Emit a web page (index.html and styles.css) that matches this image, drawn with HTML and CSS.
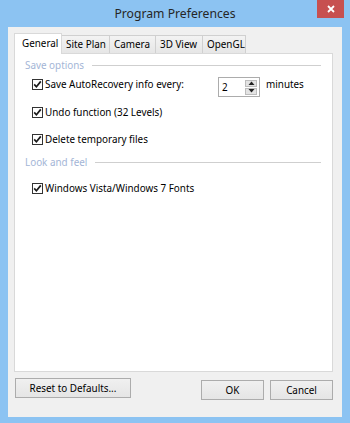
FILE: index.html
```html
<!DOCTYPE html>
<html>
<head>
<meta charset="utf-8">
<link rel="stylesheet" href="styles.css">
</head>
<body>
<div class="window">
  <div class="titlebar">
    <span class="spacer"></span>
    <div class="title">Program Preferences</div>
    <div class="close-cell">
      <div class="close">
        <svg width="8" height="8" viewBox="0 0 8 8"><path d="M1 1 L7 7 M7 1 L1 7" stroke="#fff" stroke-width="1.8" fill="none"/></svg>
      </div>
    </div>
  </div>
  <div class="client">
    <div class="tabs">
      <div class="tab active t-general">General</div>
      <div class="tab t-site">Site Plan</div>
      <div class="tab t-camera">Camera</div>
      <div class="tab t-3d">3D View</div>
      <div class="tab t-opengl">OpenGL</div>
    </div>
    <div class="panel">
      <div class="group">
        <span class="group-label label-save">Save options</span>
        <span class="rule"></span>
      </div>
      <div class="row row-1">
        <label class="check wide">
          <span class="box"><svg width="11" height="11" viewBox="0 0 11 11"><path d="M2.2 5.4 L4.4 7.8 L8.8 2.4" stroke="#1a1a1a" stroke-width="1.7" fill="none"/></svg></span>
          <span>Save AutoRecovery info every:</span>
        </label>
        <div class="spin">
          <span class="spin-value">2</span>
          <span class="spin-btns">
            <span class="spin-btn"><svg width="7" height="4" viewBox="0 0 7 4"><path d="M0.5 4 L3.5 0.5 L6.5 4 Z" fill="#222"/></svg></span>
            <span class="spin-btn"><svg width="7" height="4" viewBox="0 0 7 4"><path d="M0.5 0 L3.5 3.5 L6.5 0 Z" fill="#222"/></svg></span>
          </span>
        </div>
        <span class="unit">minutes</span>
      </div>
      <div class="row row-2">
        <label class="check">
          <span class="box"><svg width="11" height="11" viewBox="0 0 11 11"><path d="M2.2 5.4 L4.4 7.8 L8.8 2.4" stroke="#1a1a1a" stroke-width="1.7" fill="none"/></svg></span>
          <span>Undo function (32 Levels)</span>
        </label>
      </div>
      <div class="row row-3">
        <label class="check">
          <span class="box"><svg width="11" height="11" viewBox="0 0 11 11"><path d="M2.2 5.4 L4.4 7.8 L8.8 2.4" stroke="#1a1a1a" stroke-width="1.7" fill="none"/></svg></span>
          <span>Delete temporary files</span>
        </label>
      </div>
      <div class="group group-2">
        <span class="group-label label-look">Look and feel</span>
        <span class="rule"></span>
      </div>
      <div class="row row-4">
        <label class="check">
          <span class="box"><svg width="11" height="11" viewBox="0 0 11 11"><path d="M2.2 5.4 L4.4 7.8 L8.8 2.4" stroke="#1a1a1a" stroke-width="1.7" fill="none"/></svg></span>
          <span>Windows Vista/Windows 7 Fonts</span>
        </label>
      </div>
    </div>
    <div class="buttons">
      <button class="btn btn-reset">Reset to Defaults...</button>
      <span class="fill"></span>
      <button class="btn btn-ok">OK</button>
      <button class="btn btn-cancel">Cancel</button>
    </div>
  </div>
</div>
</body>
</html>
```

FILE: styles.css
```css
* { box-sizing: border-box; }
html, body { margin: 0; padding: 0; }
body {
  width: 350px;
  height: 423px;
  overflow: hidden;
  font-family: "Noto Sans", "Open Sans", sans-serif;
  font-size: 9.9px;
  color: #000;
}
.window {
  width: 350px;
  height: 423px;
  background: #8cc3f2;
  display: flex;
  flex-direction: column;
}
.titlebar {
  height: 27px;
  display: grid;
  grid-template-columns: 1fr auto 1fr;
  align-items: start;
}
.title {
  font-size: 12.2px;
  line-height: 18px;
  margin-top: 5px;
  color: #262626;
}
.close-cell {
  display: flex;
  justify-content: flex-end;
  padding-right: 6px;
}
.close {
  width: 27px;
  height: 18px;
  background: #c75050;
  display: flex;
  align-items: center;
  justify-content: center;
}
.client {
  flex: 1;
  margin: 0 8px 6px 8px;
  background: #f0f0f0;
  padding: 6px 9px 0 6px;
  display: flex;
  flex-direction: column;
}
.tabs {
  height: 20px;
  display: flex;
  align-items: flex-end;
}
.tab {
  height: 18px;
  border: 1px solid #d0d0d0;
  border-bottom: none;
  background: linear-gradient(#f3f3f3, #e6e6e6);
  line-height: 17px;
  padding-left: 4px;
  white-space: nowrap;
  margin-left: -1px;
}
.tab.active {
  height: 21px;
  margin-bottom: -1px;
  background: #fff;
  border-color: #d9d9d9;
  position: relative;
  z-index: 1;
  line-height: 19px;
  padding-left: 7px;
  margin-left: 0;
}
.t-general { width: 48px; }
.t-site { width: 49px; }
.t-camera { width: 47px; }
.t-3d { width: 48px; }
.t-opengl { width: 44px; }
.panel {
  height: 319px;
  border: 1px solid #d9d9d9;
  background: #fff;
  padding: 4px 11px 0 10px;
  display: flex;
  flex-direction: column;
}
.group {
  height: 14px;
  display: flex;
  align-items: center;
}
.group-label {
  color: #a3b5d6;
  line-height: 14px;
  white-space: nowrap;
}
.label-save { width: 67px; }
.label-look { width: 70px; }
.rule {
  flex: 1;
  height: 1px;
  background: #cfcfcf;
}
.group-2 { margin-top: 6px; }
.row {
  height: 20px;
  display: flex;
  align-items: center;
  padding-left: 7px;
}
.row-1 { margin-top: 2px; }
.row-2 { margin-top: 8px; }
.row-3 { margin-top: 7px; }
.row-4 { margin-top: 9px; }
.check {
  display: flex;
  align-items: center;
  white-space: nowrap;
}
.check.wide { width: 186px; }
.box {
  width: 11px;
  height: 11px;
  border: 1px solid #333;
  background: #fff;
  margin-right: 2px;
  display: flex;
  align-items: center;
  justify-content: center;
}
.box svg { flex: none; }
.spin {
  width: 42px;
  height: 20px;
  margin-top: 6px;
  border: 1px solid #acacac;
  background: #fff;
  display: flex;
  align-items: center;
  padding: 0 2px 0 3px;
}
.spin-value { flex: 1; }
.spin-btns {
  display: flex;
  flex-direction: column;
  gap: 1px;
}
.spin-btn {
  width: 12px;
  height: 7px;
  background: #e3e3e3;
  border: 1px solid #bcbcbc;
  display: flex;
  align-items: center;
  justify-content: center;
}
.unit { margin-left: 6px; }
.buttons {
  display: flex;
  align-items: flex-start;
  padding-left: 1px;
}
.fill { flex: 1; }
.btn {
  font-family: inherit;
  font-size: 9.9px;
  color: #000;
  height: 20px;
  border: 1px solid #acacac;
  background: linear-gradient(#f0f0f0, #e5e5e5);
  padding: 0;
  margin: 0;
}
.btn-reset { width: 116px; margin-top: 6px; }
.btn-ok { width: 63px; margin-top: 8px; }
.btn-cancel { width: 63px; margin-top: 8px; margin-left: 6px; }
```
